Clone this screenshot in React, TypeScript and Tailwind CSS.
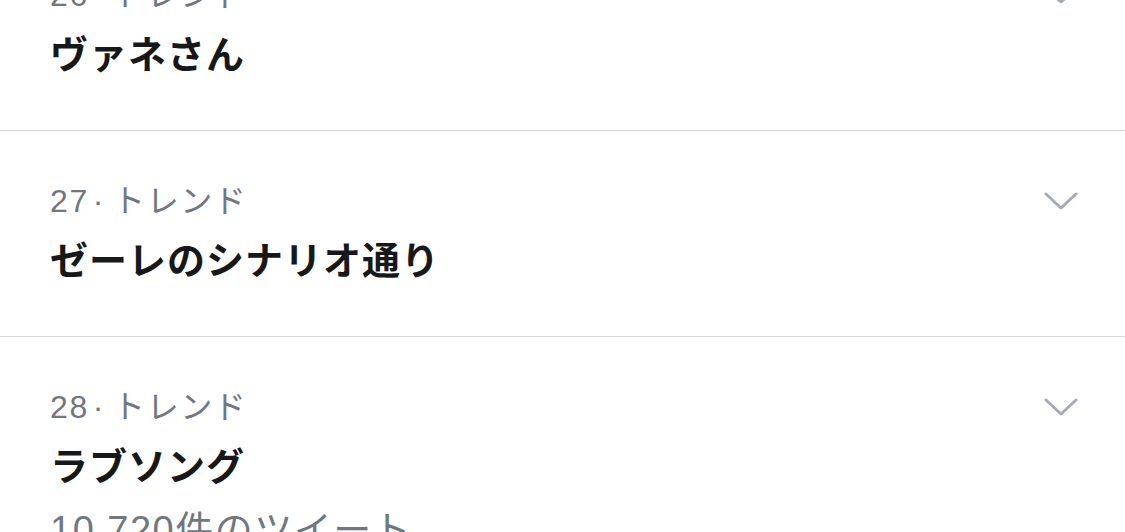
type Trend = {
  rank: number;
  name: string;
  tweets?: string;
};

const trends: Trend[] = [
  { rank: 26, name: 'ヴァネさん' },
  { rank: 27, name: 'ゼーレのシナリオ通り' },
  { rank: 28, name: 'ラブソング', tweets: '10,720件のツイート' },
];

function Chevron() {
  return (
    <svg width="34" height="18" viewBox="0 0 34 18" fill="none" className="shrink-0">
      <polyline
        points="2,2 17,16 32,2"
        stroke="#a4abb3"
        strokeWidth="3"
        strokeLinecap="round"
        strokeLinejoin="round"
      />
    </svg>
  );
}

function TrendRow({ trend }: { trend: Trend }) {
  return (
    <div className="flex items-start justify-between pl-[50px] pr-[47px] pt-[52px] pb-[53px] border-b border-[#d3d4d6]">
      <div className="flex flex-col">
        <p className="text-[32px] leading-[36px] tracking-[1.6px] text-[#6f7780]">
          {trend.rank}
          <span className="ml-[4px] mr-[8px]">·</span>
          トレンド
        </p>
        <p className="mt-[20px] text-[38px] leading-[44px] tracking-[1px] font-bold text-[#16181a]">{trend.name}</p>
        {trend.tweets && (
          <p className="mt-[19px] text-[38px] leading-[44px] tracking-[1.5px] text-[#6f7780]">{trend.tweets}</p>
        )}
      </div>
      <div className="mt-[9px]">
        <Chevron />
      </div>
    </div>
  );
}

export default function App() {
  return (
    <div
      className="w-[1125px] h-[532px] overflow-hidden bg-white"
      style={{ fontFamily: '"Liberation Sans", "Noto Sans CJK JP", sans-serif' }}
    >
      <div className="-mt-[75px]">
        {trends.map((t) => (
          <TrendRow key={t.rank} trend={t} />
        ))}
      </div>
    </div>
  );
}
